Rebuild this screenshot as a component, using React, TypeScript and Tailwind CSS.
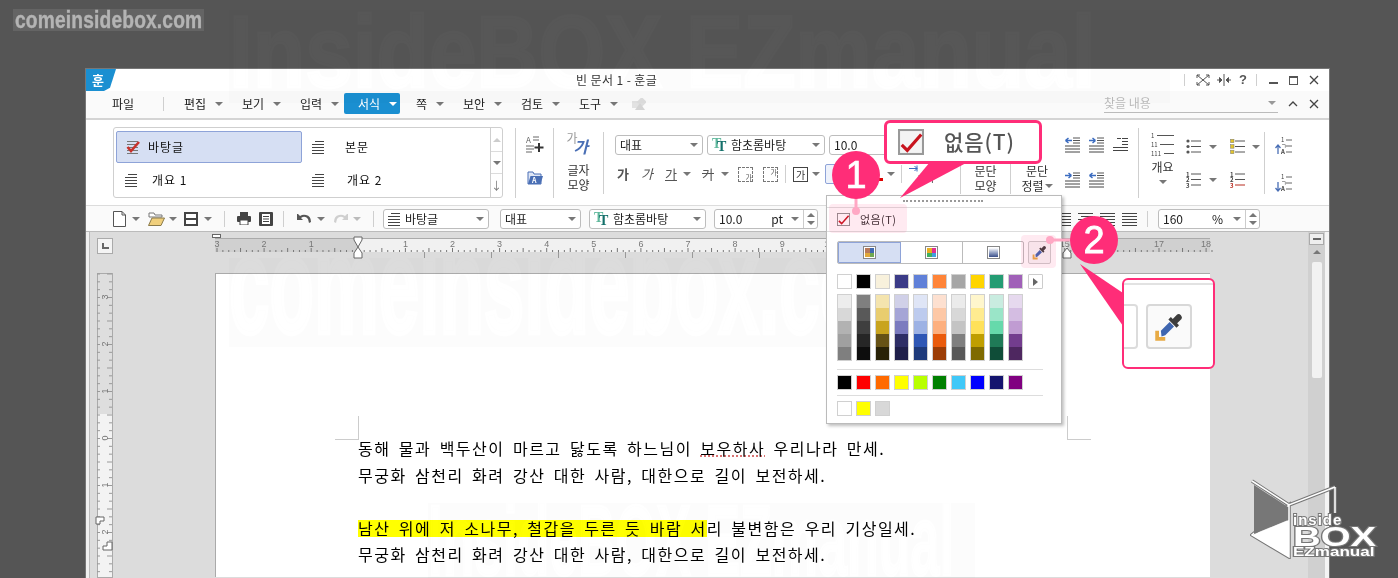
import React from "react";

const PINK = "#ff2d78";

function Caret({ className = "" }: { className?: string }) {
  return <span className={`inline-block h-0 w-0 border-x-[4px] border-t-[4px] border-x-transparent border-t-[#777] ${className}`} />;
}

function Sep({ className = "" }: { className?: string }) {
  return <span className={`block w-px bg-[#cfcfcf] ${className}`} />;
}

// stack of horizontal lines, like the paragraph glyphs in the ribbon
function Lines({ w = 15, rows, color = "#444" }: { w?: number; rows: [number, number, number][]; color?: string }) {
  return (
    <svg width={w} height={16} viewBox={`0 0 ${w} 16`} className="block shrink-0">
      {rows.map(([a, b, y], i) => (
        <line key={i} x1={a} x2={b} y1={y + 0.5} y2={y + 0.5} stroke={color} strokeWidth={1} />
      ))}
    </svg>
  );
}

const STYLE_LINES: [number, number, number][] = [
  [3, 12, 2], [0, 12, 5], [0, 12, 8], [0, 12, 11], [0, 12, 14],
];

function StyleCheck() {
  return (
    <svg width={14} height={16} viewBox="0 0 14 16" className="block shrink-0">
      <path d="M1 2.5 H12 M1 5.5 H12 M1 8.5 H12 M1 11.5 H12 M1 14.5 H12" stroke="#777" />
      <path d="M1.5 8 L5 12 L13 3" fill="none" stroke="#c8322c" strokeWidth="2.6" />
    </svg>
  );
}

function CheckBox({ size = 13, thick = false }: { size?: number; thick?: boolean }) {
  return (
    <svg width={size} height={size} viewBox="0 0 14 14" className="block shrink-0">
      <rect x="0.5" y="0.5" width="13" height="13" fill={thick ? "#f4f4f4" : "#fff"} stroke={thick ? "#999" : "#8a8a8a"} strokeWidth={thick ? 1.2 : 1} />
      <path d="M2 8.5 L5 11.5 L12.5 3" fill="none" stroke="#c8141e" strokeWidth="1.7" />
    </svg>
  );
}

function Dropper({ size = 16 }: { size?: number }) {
  return (
    <svg width={size} height={size} viewBox="0 0 24 24" className="block shrink-0">
      <path d="M15 5.5 L18.5 2 Q20 1 21.5 2.5 Q23 4 22 5.5 L18.5 9 L20 10.5 L18 12.5 L11.5 6 L13.5 4 Z" fill="#3d3d3d" />
      <path d="M12.5 8 L16 11.5 L9 18.5 L6 19.5 L5.5 15 Z" fill="#3f66b0" />
      <path d="M1 15 H4 V20 H9 V23 H1 Z" fill="#e8ab45" />
    </svg>
  );
}

function FontT() {
  return (
    <span className="relative block h-[14px] w-[15px] shrink-0 font-['Liberation_Serif',serif] text-[14px] font-bold leading-[14px]">
      <span className="absolute left-0 top-[-1px] text-[#5fb89c]">T</span>
      <span className="absolute left-[5px] top-[2px] text-[#14706a]">T</span>
    </span>
  );
}

function Field({ w, children, spin = false, caret = true }: { w: number; children: React.ReactNode; spin?: boolean; caret?: boolean }) {
  return (
    <div style={{ width: w }} className="flex h-[20px] shrink-0 items-center rounded-[3px] border border-[#bdbdbd] bg-white pl-[4px] text-[12px] text-[#222]">
      <div className="flex min-w-0 flex-1 items-center gap-[4px] whitespace-nowrap">{children}</div>
      {caret && <Caret className="mr-[4px] ml-[2px]" />}
      {spin && (
        <div className="flex h-full w-[14px] flex-col items-center justify-center gap-[4px] border-l border-[#ccc]">
          <span className="h-0 w-0 border-x-[4px] border-b-[4px] border-x-transparent border-b-[#777]" />
          <span className="h-0 w-0 border-x-[4px] border-t-[4px] border-x-transparent border-t-[#777]" />
        </div>
      )}
    </div>
  );
}

function Menu({ label, w, active = false }: { label: string; w: number; active?: boolean }) {
  if (active) {
    return (
      <div style={{ width: w }} className="shrink-0">
        <div className="flex h-[21px] w-[56px] items-center rounded-[2px] bg-[#1a8fd1] pl-[14px] text-[12px] text-white">
          {label}
          <span className="ml-[9px] h-0 w-0 border-x-[4px] border-t-[4px] border-x-transparent border-t-white" />
        </div>
      </div>
    );
  }
  return (
    <div style={{ width: w }} className="flex shrink-0 items-center text-[12px] text-[#222]">
      {label}
      <Caret className="ml-[9px]" />
    </div>
  );
}

function GalleryItem({ label, selected = false, indent }: { label: string; selected?: boolean; indent: number }) {
  return (
    <div className={`flex h-[32px] w-[186px] items-center pl-[9px] text-[12px] text-[#111] ${selected ? "rounded-[2px] border border-[#8ea3d8] bg-[#d6dff3]" : ""}`}>
      {selected ? <StyleCheck /> : <Lines w={13} rows={STYLE_LINES} />}
      <span style={{ marginLeft: indent }} className="tracking-[1px] whitespace-pre">{label}</span>
    </div>
  );
}

function Gallery() {
  return (
    <div className="mt-[7px] ml-[27px] flex h-[71px] w-[390px] shrink-0 rounded-[3px] border border-[#cfcfcf] pl-[2px] pt-[3px]">
      <div className="grid w-[374px] grid-cols-2 grid-rows-2 gap-x-[0px]">
        <GalleryItem label="바탕글" selected indent={8} />
        <GalleryItem label="본문" indent={20} />
        <GalleryItem label="개요 1" indent={14} />
        <GalleryItem label="개요 2" indent={22} />
      </div>
      <div className="mt-[-3px] flex h-[69px] w-[12px] flex-col items-center border-l border-[#cfcfcf] text-[#777]">
        <div className="flex h-[23px] items-center"><span className="h-0 w-0 border-x-[4px] border-b-[4px] border-x-transparent border-b-[#ccc]" /></div>
        <div className="flex h-[23px] w-full items-center justify-center border-y border-[#dcdcdc]"><Caret /></div>
        <div className="flex h-[23px] items-center text-[11px]">↓</div>
      </div>
    </div>
  );
}

function FontRow2() {
  return (
    <div className="mt-[9px] ml-[13px] flex h-[20px] items-center text-[13px] text-[#555]">
      <span className="w-[24px] font-bold">가</span>
      <span className="w-[24px] italic">가</span>
      <span className="w-[18px] underline">가</span>
      <Caret className="mr-[11px]" />
      <span className="w-[19px] line-through">가</span>
      <Caret className="mr-[9px]" />
      <span className="mr-[10px] flex h-[15px] w-[15px] items-end justify-end border border-dashed border-[#777] text-[7px] leading-[8px]">가</span>
      <span className="flex h-[15px] w-[15px] items-start justify-end border border-dashed border-[#777] text-[7px] leading-[8px]">가</span>
      <Sep className="mx-[7px] h-[18px]" />
      <span className="flex h-[15px] w-[15px] items-center justify-center border border-[#444] text-[10px] text-[#333]">가</span>
      <Caret className="ml-[4px]" />
      <span className="ml-[5px] h-[20px] w-[30px] rounded-[2px] border border-[#8ea3d8] bg-[#eef2fb]" />
      <span className="ml-[14px] flex w-[14px] flex-col items-center">
        <span className="text-[10px] leading-[10px]">&nbsp;</span>
        <span className="h-[3px] w-[13px] bg-[#e00000]" />
      </span>
      <Caret className="ml-[4px]" />
      <Sep className="ml-[6px] h-[18px]" />
      <div className="ml-[6px] flex h-[20px] w-[36px] flex-col items-center justify-end">
        <svg width={34} height={8} viewBox="0 0 34 8">
          <path d="M0 3.5 H8 M8 0.5 V6.5 M5.5 1 L8 3.5 L5.5 6 M26 3.5 H34 M26 0.5 V6.5 M28.5 1 L26 3.5 L28.5 6" stroke="#3b6cc0" fill="none" />
        </svg>
        <span className="text-[9px] leading-[11px] text-[#333]">가나</span>
      </div>
    </div>
  );
}

function ParaIcon({ arrow, left = true }: { arrow: boolean; left?: boolean }) {
  return (
    <svg width={15} height={16} viewBox="0 0 15 16" className="block shrink-0">
      {arrow && <path d={left ? "M0.5 3.5 H7 M0.5 3.5 L3.5 1 M0.5 3.5 L3.5 6" : "M0 3.5 H6.5 M6.5 3.5 L3.5 1 M6.5 3.5 L3.5 6"} stroke="#3b6cc0" strokeWidth={1.5} fill="none" />}
      {[1, 3.5, 6].map((y) => <line key={y} x1={8} x2={15} y1={y} y2={y} stroke="#555" />)}
      {[9, 12, 15].map((y) => <line key={y} x1={0} x2={15} y1={y} y2={y} stroke="#444" />)}
    </svg>
  );
}

function ListIcon({ kind }: { kind: "dot" | "sq" | "num" | "red" }) {
  return (
    <svg width={15} height={16} viewBox="0 0 15 16" className="block shrink-0">
      {[2, 7.5, 13].map((y, i) => (
        <g key={y}>
          {kind === "dot" && <circle cx={2} cy={y} r={1.6} fill="#555" />}
          {kind === "sq" && <rect x={0.5} y={y - 1.8} width={3.5} height={3.5} fill="#e2c42c" stroke="#777" strokeWidth={0.5} />}
          {(kind === "num" || kind === "red") && (
            <text x={0} y={y + 2.5} fontSize={6} fontWeight={700} fill={kind === "red" && i === 2 ? "#b82c20" : "#444"}>{i + 1}</text>
          )}
          <line x1={5} x2={15} y1={y} y2={y} stroke={kind === "red" && i === 2 ? "#b82c20" : "#555"} />
        </g>
      ))}
    </svg>
  );
}

function SortIcon({ up }: { up: boolean }) {
  return (
    <svg width={17} height={18} viewBox="0 0 17 18" className="block shrink-0">
      <text x={6} y={5} fontSize={6} fill="#444">1</text>
      <text x={6} y={11} fontSize={6} fill="#444">ㄱ</text>
      <text x={6} y={17} fontSize={6} fontWeight={700} fill="#444">A</text>
      {[3, 9, 15].map((y) => <line key={y} x1={11} x2={17} y1={y} y2={y} stroke="#666" />)}
      <path d={up ? "M3 17 V8 M0.5 11 L3 8 L5.5 11" : "M3 8 V17 M0.5 14 L3 17 L5.5 14"} stroke="#4a6fb5" strokeWidth={1.3} fill="none" />
    </svg>
  );
}

function Ribbon() {
  return (
    <div className="flex h-[86px] border-b border-[#dcdcdc] bg-white text-[#333]">
      <Gallery />
      <Sep className="mt-[8px] ml-[12px] h-[70px]" />
      <div className="flex w-[37px] flex-col items-center pt-[15px]">
        <svg width={18} height={18} viewBox="0 0 18 18">
          <text x={0} y={8} fontSize={8} fill="#666">A</text>
          <path d="M7 2 H13 M7 5 H13 M0 11 H8 M0 14 H8 M0 17 H6" stroke="#666" fill="none" />
          <path d="M13 8 V17 M8.5 12.5 H17.5" stroke="#333" strokeWidth={2} />
        </svg>
        <svg width={16} height={14} viewBox="0 0 16 14" className="mt-[18px]">
          <path d="M1 1 H6 L7 3 H14 V13 H1 Z" fill="#dfe7f6" stroke="#4a6fb5" />
          <path d="M3.5 5 H16 L13.5 13 H1 Z" fill="#4a6fb5" />
          <text x={5} y={12} fontSize={7} fontWeight={700} fill="#fff">A</text>
        </svg>
      </div>
      <Sep className="mt-[8px] h-[70px]" />
      <div className="flex w-[49px] flex-col items-center pt-[12px] text-[12px] leading-[15px]">
        <div className="relative h-[24px] w-[24px]">
          <span className="absolute left-0 top-0 text-[12px] leading-[12px] text-[#999]">가</span>
          <span className="absolute left-[7px] top-[6px] text-[16px] font-bold italic leading-[17px] text-[#4a6fb5]">가</span>
        </div>
        <span className="mt-[6px]">글자</span>
        <span>모양</span>
      </div>
      <Sep className="mt-[12px] h-[62px]" />
      <div className="w-[356px] pl-[11px] pt-[15px]">
        <div className="flex gap-[4px]">
          <Field w={88}>대표</Field>
          <Field w={118}><FontT />함초롬바탕</Field>
          <Field w={100} caret={false}>10.0</Field>
        </div>
        <div className="ml-[-11px]"><FontRow2 /></div>
      </div>
      <Sep className="mt-[12px] h-[62px]" />
      <div className="flex w-[49px] flex-col items-center pt-[43px] text-[12px] leading-[15px]">
        <span>문단</span>
        <span>모양</span>
      </div>
      <Sep className="mt-[12px] h-[62px]" />
      <div className="flex w-[52px] flex-col items-center pt-[43px] text-[12px] leading-[15px]">
        <span>문단</span>
        <span className="flex items-center">정렬<Caret className="ml-[1px] border-x-[3px] border-t-[3px]" /></span>
      </div>
      <div className="flex w-[75px] flex-col gap-[19px] pl-[2px] pt-[17px]">
        <div className="flex gap-[9px]">
          <ParaIcon arrow />
          <ParaIcon arrow left={false} />
          <Lines rows={[[4, 8, 1], [9, 15, 1], [9, 15, 4], [9, 15, 7], [0, 15, 10], [0, 15, 13]]} />
        </div>
        <div className="flex gap-[9px]">
          <ParaIcon arrow left={false} />
          <ParaIcon arrow />
        </div>
      </div>
      <Sep className="mt-[8px] h-[70px]" />
      <div className="flex w-[47px] flex-col items-center pt-[12px] text-[12px]">
        <svg width={24} height={26} viewBox="0 0 24 26">
          <text x={0} y={6} fontSize={6} fill="#444">1</text>
          <text x={0} y={15} fontSize={6} fill="#444">11</text>
          <text x={0} y={24} fontSize={6} fill="#444">111</text>
          <path d="M6 3.5 H23 M9 12.5 H23 M13 21.5 H23" stroke="#555" />
        </svg>
        <span className="leading-[18px]">개요</span>
        <Caret className="mt-[4px]" />
      </div>
      <div className="flex w-[78px] flex-col gap-[17px] pt-[19px]">
        <div className="flex items-center">
          <ListIcon kind="dot" /><Caret className="ml-[8px] mr-[13px]" /><ListIcon kind="sq" /><Caret className="ml-[7px]" />
        </div>
        <div className="flex items-center">
          <ListIcon kind="num" /><Caret className="ml-[8px] mr-[13px]" /><ListIcon kind="red" />
        </div>
      </div>
      <Sep className="mt-[12px] h-[62px]" />
      <div className="ml-[10px] flex flex-col gap-[19px] pt-[17px]">
        <SortIcon up />
        <SortIcon up={false} />
      </div>
    </div>
  );
}

function Toolbar() {
  return (
    <div className="flex h-[26px] items-center border-b border-[#bbb] bg-[#fafafa] pl-[27px] text-[12px]">
      <svg width={13} height={16} viewBox="0 0 13 16" className="block">
        <path d="M0.5 0.5 H9 L12.5 4 V15.5 H0.5 Z M9 0.5 V4 H12.5" fill="#fff" stroke="#555" />
      </svg>
      <Caret className="ml-[6px] mr-[8px]" />
      <svg width={17} height={14} viewBox="0 0 17 14" className="block">
        <path d="M1 1 H6 L7 3 H14 V5 H1 Z" fill="#fff" stroke="#777" />
        <path d="M4 6 H16.5 L13 13.5 H0.5 Z" fill="#f0cf7c" stroke="#8a7a4a" />
      </svg>
      <Caret className="ml-[4px] mr-[7px]" />
      <svg width={14} height={14} viewBox="0 0 14 14" className="block">
        <rect width={14} height={14} fill="#444" />
        <rect x={2} y={2} width={10} height={4} fill="#fff" />
        <rect x={2} y={8} width={10} height={4} fill="#fff" />
      </svg>
      <Caret className="ml-[6px]" />
      <Sep className="ml-[12px] h-[16px]" />
      <svg width={14} height={13} viewBox="0 0 14 13" className="ml-[12px] block">
        <rect x={3} y={0} width={8} height={4} fill="#444" />
        <rect x={0} y={4} width={14} height={6} rx={1} fill="#444" />
        <rect x={3} y={8} width={8} height={5} fill="#fff" stroke="#444" />
      </svg>
      <svg width={14} height={14} viewBox="0 0 14 14" className="ml-[8px] block">
        <rect width={14} height={14} rx={1} fill="#444" />
        <rect x={3} y={2} width={8} height={10} fill="#fff" />
        <path d="M4 4.5 H10 M4 7 H10 M4 9.5 H10" stroke="#444" />
      </svg>
      <Sep className="ml-[10px] h-[16px]" />
      <svg width={15} height={11} viewBox="0 0 15 11" className="ml-[13px] block">
        <path d="M0 1 V7 H6 L4 5 Q8 2 11 6 L12 10 L14 9 Q14 3 9 2 Q6 1 3 3 L1 1 Z" fill="#555" />
      </svg>
      <Caret className="ml-[5px] mr-[8px]" />
      <svg width={15} height={11} viewBox="0 0 15 11" className="block">
        <path d="M15 1 V7 H9 L11 5 Q7 2 4 6 L3 10 L1 9 Q1 3 6 2 Q9 1 12 3 L14 1 Z" fill="#cfcfcf" />
      </svg>
      <Caret className="ml-[5px] border-t-[#bbb]" />
      <Sep className="ml-[12px] h-[16px]" />
      <div className="ml-[9px]">
        <Field w={106}><Lines w={13} rows={STYLE_LINES} />바탕글</Field>
      </div>
      <div className="ml-[11px] flex gap-[8px]">
        <Field w={81}>대표</Field>
        <Field w={117}><FontT />함초롬바탕</Field>
      </div>
      <div className="ml-[8px]">
        <Field w={104} caret spin><span className="flex w-full justify-between pr-[6px]"><span>10.0</span><span>pt</span></span></Field>
      </div>
      <div className="ml-[238px] flex gap-[7px]">
        {[0, 1, 2, 3].map((i) => (
          <Lines key={i} rows={[[0, 15, 2], [i === 1 ? 3 : 0, 15, 5], [0, 15, 8], [i === 1 ? 3 : 0, 15, 11], [0, 15, 14]]} />
        ))}
      </div>
      <Sep className="ml-[10px] h-[16px]" />
      <div className="ml-[10px]">
        <Field w={102} caret spin><span className="flex w-full justify-between pr-[8px]"><span>160</span><span>%</span></span></Field>
      </div>
    </div>
  );
}

function HRuler() {
  const u = 47.1;
  const o = 143;
  const ticks = [];
  for (let i = 0; i < 170; i++) {
    const x = 2 + i * (u / 8);
    ticks.push(<line key={i} x1={x} x2={x} y1={i % 4 === 0 ? 10 : 12} y2={14} stroke="#777" />);
  }
  for (let i = 0; i < 10; i++) {
    const x = 209.5 + i * 67;
    ticks.push(<line key={`t${i}`} x1={x} x2={x} y1={14} y2={20} stroke="#999" />);
  }
  const nums = [3, 2, 1, 0, 1, 2, 3, 4, 5, 6, 7, 8, 9, 10, 11, 12, 13, 14, 15, 16, 17, 18];
  return (
    <svg width={995} height={24} viewBox="0 0 995 24" className="block overflow-visible">
      <rect x={0} y={0} width={995} height={14} fill="#d0d0d0" />
      <rect x={o} y={0} width={709} height={14} fill="#f1f1f1" />
      <line x1={0} x2={995} y1={0.5} y2={0.5} stroke="#aaa" />
      {ticks}
      {nums.map((n, i) => (
        <text key={i} x={2 + i * u} y={9} fontSize={9} textAnchor="middle" fill="#777" fontFamily="Liberation Sans">{n === 0 ? "" : n}</text>
      ))}
      <rect x={-2.5} y={-3.5} width={8} height={3} fill="#fff" stroke="#666" />
      <path d={`M${o - 4} -1 H${o + 4} V2 L${o} 9 L${o + 4} 15 V20 H${o - 4} V15 L${o} 9 L${o - 4} 2 Z`} fill="#fff" stroke="#666" />
      <path d={`M${o + 709 - 4} 20 V15 L${o + 709} 10 L${o + 709 + 4} 15 V20 Z`} fill="#fff" stroke="#666" />
    </svg>
  );
}

function VRuler() {
  const u = 47;
  const ticks = [];
  for (let i = 0; i < 40; i++) {
    const y = 1 + i * (u / 6);
    ticks.push(
      <g key={i}>
        <line x1={0} x2={3} y1={y} y2={y} stroke="#999" />
        <line x1={i % 3 === 0 ? 10 : 12} x2={15} y1={y} y2={y} stroke="#999" />
      </g>,
    );
  }
  const nums: [string, number][] = [["3", 24], ["2", 71], ["1", 118], ["0", 165], ["1", 212], ["2", 259]];
  return (
    <svg width={16} height={304} viewBox="0 0 16 304" className="block shrink-0 overflow-visible">
      <rect x={0.5} y={0.5} width={15} height={304} fill="#f3f3f3" stroke="#aaa" />
      <rect x={1} y={1} width={14} height={140} fill="#dedede" />
      {ticks}
      {nums.map(([n, y], i) => (
        <text key={i} x={8} y={y + 3} fontSize={9} textAnchor="middle" fill="#777" fontFamily="Liberation Sans" transform={`rotate(-90 8 ${y})`}>{n}</text>
      ))}
      <path d="M-1 244 H7 V248 H3 V251 H-1 Z" fill="#fff" stroke="#666" />
      <path d="M16 269 H11 V273 H7 V277 H16 Z" fill="#fff" stroke="#666" transform="translate(-1 0)" />
    </svg>
  );
}

function Doc() {
  return (
    <div className="relative ml-[102px] mt-[16px] h-[304px] w-[995px] border-l border-t border-[#aaa] bg-white">
      <span className="absolute left-[119px] top-[142px] h-[24px] w-[24px] border-b border-r border-[#ccc]" />
      <span className="absolute left-[851px] top-[142px] h-[24px] w-[24px] border-b border-l border-[#ccc]" />
      <div className="pl-[142px] pt-[161px] text-[16px] leading-[26.5px] tracking-[1.5px] text-black [word-spacing:3.3px]">
        <p className="whitespace-nowrap">동해 물과 백두산이 마르고 닳도록 하느님이 <span className="underline decoration-dotted decoration-[#c44]">보우하사</span> 우리나라 만세.</p>
        <p className="whitespace-nowrap">무궁화 삼천리 화려 강산 대한 사람, 대한으로 길이 보전하세.</p>
        <p className="h-[26.5px]" />
        <p className="whitespace-nowrap"><span className="inline-block h-[17px] bg-[#ffff00] leading-[17px]">남산 위에 저 소나무, 철갑을 두른 듯 바람 서</span>리 불변함은 우리 기상일세.</p>
        <p className="whitespace-nowrap">무궁화 삼천리 화려 강산 대한 사람, 대한으로 길이 보전하세.</p>
      </div>
    </div>
  );
}

function Main() {
  return (
    <div className="flex h-[346px] overflow-hidden bg-[#dcdcdc]">
      <div className="h-full w-[4px] border-r border-[#bbb] bg-[#f0f0f0]" />
      <div className="w-[1218px] shrink-0">
        <div className="flex pt-[6px]">
          <div className="ml-[7px] flex h-[16px] w-[16px] items-center justify-center border border-[#aaa] bg-[#f4f4f4]">
            <span className="mb-[1px] h-[6px] w-[7px] border-b-2 border-l-2 border-[#666]" />
          </div>
          <div className="ml-[102px]"><HRuler /></div>
        </div>
        <div className="mt-[-5px] flex">
          <div className="ml-[7px] mt-[16px]"><VRuler /></div>
          <Doc />
        </div>
      </div>
      <div className="flex w-[17px] shrink-0 flex-col items-center bg-[#d0d0d0]">
        <div className="mt-[1px] flex h-[12px] w-[15px] items-center justify-center border border-[#aaa] bg-[#eee]">
          <span className="h-[2px] w-[8px] bg-[#666]" />
        </div>
        <div className="flex h-[14px] items-center"><span className="h-0 w-0 border-x-[4px] border-b-[4px] border-x-transparent border-b-[#777]" /></div>
        <div className="mt-[3px] h-[116px] w-[10px] rounded-[2px] bg-[#f2f2f2]" />
      </div>
      <div className="w-[4px] bg-[#f4f4f4]" />
    </div>
  );
}

const ROW1 = ["#ffffff", "#000000", "#f8f1dc", "#3b3b87", "#6080d8", "#ff8438", "#a6a6a6", "#ffd500", "#249c73", "#a060b8"];
const COLS = [
  ["#ededed", "#d8d8d8", "#b2b2b2", "#a0a0a0", "#7f7f7f"],
  ["#7f7f7f", "#595959", "#3f3f3f", "#262626", "#0d0d0d"],
  ["#f4e4ae", "#e9cd6f", "#c9a41e", "#665215", "#282106"],
  ["#d0d0e8", "#a5a5d6", "#7b7bbf", "#2e2e66", "#1f1f4a"],
  ["#dfe5f6", "#bdcbee", "#9db2e4", "#2f57b5", "#1e3a7b"],
  ["#fde0d0", "#fdc8a6", "#fdb07f", "#ea5b0c", "#9c3d06"],
  ["#ebebeb", "#d8d8d8", "#c4c4c4", "#7f7f7f", "#595959"],
  ["#fff6cc", "#ffeb90", "#ffe15a", "#bf9e00", "#7f6a00"],
  ["#c9ece0", "#9ae5c8", "#66d9ab", "#1f7a57", "#0f4d38"],
  ["#e6d9ee", "#d4bde2", "#c09cd2", "#733d8e", "#4e2760"],
];
const ROW2 = ["#000000", "#ff0000", "#ff6a00", "#ffff00", "#b8ff00", "#008000", "#40c8f8", "#0000ff", "#14146e", "#800080"];
const ROW3 = ["#ffffff", "#ffff00", "#d8d8d8"];

function Swatch({ c }: { c: string }) {
  return <span style={{ backgroundColor: c }} className="block h-[15px] w-[15px] border border-[#d0d0d0]" />;
}

function TabIcon({ kind }: { kind: number }) {
  return (
    <span className="grid h-[13px] w-[13px] grid-cols-2 border border-[#888] bg-white p-[1px]">
      {kind === 0 && ["#b87a5a", "#4068b0", "#e0a83a", "#70a850"].map((c) => <span key={c} style={{ backgroundColor: c }} />)}
      {kind === 1 && ["#e8b020", "#e03090", "#40b060", "#40a0e0"].map((c) => <span key={c} style={{ backgroundColor: c }} />)}
      {kind === 2 && <span className="col-span-2 h-full bg-gradient-to-b from-white to-[#3b4f8a]" />}
    </span>
  );
}

function ColorPopup() {
  return (
    <div className="absolute left-[826px] top-[195px] h-[229px] w-[236px] border border-[#bbb] bg-white shadow-[2px_2px_3px_rgba(0,0,0,0.25)]">
      <div className="flex h-[12px] justify-end border-b border-[#ddd] pr-[78px] pt-[4px]">
        <span className="h-[2px] w-[80px] border-t-2 border-dotted border-[#999]" />
      </div>
      <div className="flex h-[24px] items-center gap-[10px] border-b border-[#ddd] pl-[10px] text-[11px] tracking-[0.4px] text-[#333]">
        <CheckBox />
        <span>없음(T)</span>
      </div>
      <div className="flex pl-[10px] pt-[9px]">
        <div className="flex h-[23px] w-[187px] overflow-hidden rounded-[2px] border border-[#bbb]">
          <div className="flex w-[63px] items-center justify-center border border-[#8ea3d8] bg-[#d6dff3]"><TabIcon kind={0} /></div>
          <div className="flex w-[62px] items-center justify-center border-r border-[#bbb]"><TabIcon kind={1} /></div>
          <div className="flex flex-1 items-center justify-center"><TabIcon kind={2} /></div>
        </div>
        <div className="ml-[4px] flex h-[23px] w-[23px] items-center justify-center rounded-[2px] border border-[#ccc] bg-[#f8f8f8]"><Dropper size={15} /></div>
      </div>
      <div className="mt-[10px] flex items-center gap-[4px] pl-[10px]">
        {ROW1.map((c) => <Swatch key={c} c={c} />)}
        <span className="ml-[1px] flex h-[15px] w-[15px] items-center justify-center rounded-[1px] border border-[#ccc]">
          <span className="h-0 w-0 border-y-[4px] border-l-[5px] border-y-transparent border-l-[#666]" />
        </span>
      </div>
      <div className="mt-[5px] flex gap-[4px] pl-[10px]">
        {COLS.map((col, i) => (
          <div key={i} className="w-[15px] border border-[#d0d0d0]">
            {col.map((c, j) => <span key={j} style={{ backgroundColor: c }} className="block h-[13px]" />)}
          </div>
        ))}
      </div>
      <div className="ml-[10px] mt-[8px] h-px w-[206px] bg-[#ddd]" />
      <div className="mt-[5px] flex gap-[4px] pl-[10px]">
        {ROW2.map((c) => <Swatch key={c} c={c} />)}
      </div>
      <div className="ml-[10px] mt-[5px] h-px w-[206px] bg-[#ddd]" />
      <div className="mt-[5px] flex gap-[4px] pl-[10px]">
        {ROW3.map((c) => <Swatch key={c} c={c} />)}
      </div>
    </div>
  );
}

function Annotations() {
  return (
    <>
      <div className="absolute left-[829px] top-[204px] h-[29px] w-[78px] rounded-[4px] bg-[#ff2d78]/10" />
      <div className="absolute left-[1021px] top-[235px] h-[33px] w-[35px] rounded-[4px] bg-[#ff2d78]/10" />
      <svg width={1398} height={578} viewBox="0 0 1398 578" className="pointer-events-none absolute left-0 top-0">
        <polygon points="930,162 968,162 900,198" fill={PINK} />
        <polygon points="1080,264 1123,293 1123,326" fill={PINK} />
        <line x1={856} x2={856} y1={195} y2={212} stroke="#ffa8c4" strokeWidth={3} />
        <circle cx={856} cy={211} r={4} fill="#ffa8c4" />
        <line x1={1050} x2={1075} y1={240} y2={240} stroke="#ffa8c4" strokeWidth={3} />
        <circle cx={1050} cy={240} r={4} fill="#ffa8c4" />
      </svg>
      <div className="absolute left-[884px] top-[120px] flex h-[44px] w-[158px] items-center rounded-[6px] border-[3px] border-[#ff2d78] bg-white pl-[11px]">
        <CheckBox size={26} thick />
        <span className="ml-[20px] text-[21px] font-medium tracking-[0.9px] whitespace-nowrap text-[#555]">없음(T)</span>
      </div>
      <div className="absolute left-[832px] top-[151px] flex h-[48px] w-[48px] items-center justify-center rounded-full bg-[#ff2d78] font-['Liberation_Sans',sans-serif] text-[38px] text-white [-webkit-text-stroke:0.6px_#fff]">1</div>
      <div className="absolute left-[1070px] top-[216px] flex h-[48px] w-[48px] items-center justify-center rounded-full bg-[#ff2d78] font-['Liberation_Sans',sans-serif] text-[38px] text-white [-webkit-text-stroke:0.8px_#fff]">2</div>
      <div className="absolute left-[1122px] top-[278px] h-[91px] w-[93px] rounded-[6px] border-2 border-[#ff2d78] bg-white">
        <div className="mt-[3px] h-[2px] bg-[#e2e2e2]" />
        <div className="mt-[19px] flex">
          <span className="h-[45px] w-[14px] rounded-r-[4px] border-2 border-l-0 border-[#dcdcdc]" />
          <span className="ml-[8px] flex h-[45px] w-[46px] items-center justify-center rounded-[4px] border-2 border-[#d8d8d8] bg-[#fafafa]">
            <Dropper size={30} />
          </span>
        </div>
      </div>
    </>
  );
}

// faint oversized stamps: the box darkens a little, the letters add the light back
function Watermarks() {
  const stamp = "block origin-left whitespace-nowrap font-['Liberation_Sans',sans-serif] font-bold text-[#030303] mix-blend-plus-lighter";
  return (
    <>
      <div className="pointer-events-none absolute left-[229px] top-[10px] h-[93px] w-[941px] overflow-hidden bg-black/[0.012]">
        <span className={`${stamp} mt-[-4px] scale-x-[0.84] text-[102px] leading-[93px] [-webkit-text-stroke:3px_#030303]`}>InsideBOX EZmanual</span>
      </div>
      <div className="pointer-events-none absolute left-[229px] top-[258px] h-[89px] w-[820px] overflow-hidden bg-black/[0.012]">
        <span className={`${stamp} mt-[-18px] scale-x-[0.52] text-[140px] leading-[89px] [-webkit-text-stroke:5px_#030303]`}>comeinsidebox.com</span>
      </div>
      <div className="pointer-events-none absolute left-[428px] top-[503px] h-[75px] w-[547px] overflow-hidden bg-black/[0.012]">
        <span className={`${stamp} scale-x-[0.52] text-[100px] leading-[75px] [-webkit-text-stroke:3px_#030303]`}>InsideBOX EZmanual</span>
      </div>
    </>
  );
}

function Logo() {
  const edge = "font-['Liberation_Sans',sans-serif] font-bold leading-none text-white [paint-order:stroke_fill] [-webkit-text-stroke:2px_#777] whitespace-nowrap";
  return (
    <div className="pointer-events-none absolute left-[1250px] top-[479px] h-[99px] w-[128px]">
      <svg width={90} height={80} viewBox="0 0 90 80" className="absolute left-0 top-0">
        <path d="M2 2 L39 26 L85 8 M85 8 V34 M39 26 V78 L2 56 Z" fill="none" stroke="#777" strokeWidth={3.5} />
        <path d="M2 2 L39 26 L85 8 M85 8 V34 M39 26 V78 L2 56 Z" fill="none" stroke="#fff" strokeWidth={1.5} />
        <path d="M4 6 L38 28 V41 L4 55 Z" fill="#777" />
        <path d="M2 56 L39 41 V78 Z" fill="#fff" />
      </svg>
      <div className="absolute left-[43px] top-[33px] w-[84px]">
        <div className={`${edge} h-[12px] text-[15px] tracking-[1px]`}>inside</div>
        <div className={`${edge} h-[22px] origin-top-left scale-x-[1.42] text-[27px] leading-[22px]`}>BOX</div>
        <div className={`${edge} h-[10px] origin-top-left scale-x-[1.42] text-[12px] leading-[10px]`}>EZmanual</div>
      </div>
    </div>
  );
}

function TitleBar() {
  return (
    <div className="relative flex h-[22px] items-center bg-white text-[12px] text-[#333]">
      <div className="flex h-[22px] w-[30px] items-center bg-[#1a8fd1] pl-[6px] text-[13px] font-bold text-white [clip-path:polygon(0_0,100%_0,80%_85%,60%_100%,0_100%)]">훈</div>
      <span className="ml-[460px] tracking-[0.4px]">빈 문서 1 - 훈글</span>
      <div className="ml-auto flex items-center pr-[10px] text-[#444]">
        <Sep className="mr-[11px] h-[12px]" />
        <svg width={14} height={12} viewBox="0 0 14 12"><path d="M1 1 L13 11 M13 1 L1 11 M1 4 V1 H4 M10 1 H13 V4 M1 8 V11 H4 M10 11 H13 V8" fill="none" stroke="#555" /></svg>
        <svg width={14} height={12} viewBox="0 0 14 12" className="ml-[7px]"><path d="M7 0 V12 M0 6 H5 M9 6 H14 M5 6 L2.5 3.5 V8.5 Z M9 6 L11.5 3.5 V8.5 Z" fill="#555" stroke="#555" /></svg>
        <span className="ml-[8px] w-[10px] font-['Liberation_Sans',sans-serif] text-[13px] font-bold text-[#555]">?</span>
        <Sep className="ml-[7px] mr-[12px] h-[12px]" />
        <span className="mt-[6px] h-[2px] w-[9px] bg-[#555]" />
        <span className="ml-[11px] h-[9px] w-[9px] border border-t-2 border-[#555]" />
        <svg width={10} height={10} viewBox="0 0 10 10" className="ml-[11px]"><path d="M1 1 L9 9 M9 1 L1 9" stroke="#444" strokeWidth={1.3} /></svg>
      </div>
    </div>
  );
}

function MenuBar() {
  return (
    <div className="flex h-[29px] items-center border-b-2 border-[#d4d4d4] bg-[#fafafa] pl-[26px] pb-[2px] text-[12px] text-[#222]">
      <span className="w-[51px] shrink-0">파일</span>
      <Sep className="mr-[20px] h-[14px]" />
      <Menu label="편집" w={58} />
      <Menu label="보기" w={58} />
      <Menu label="입력" w={44} />
      <Menu label="서식" w={72} active />
      <Menu label="쪽" w={47} />
      <Menu label="보안" w={58} />
      <Menu label="검토" w={58} />
      <Menu label="도구" w={53} />
      <svg width={14} height={12} viewBox="0 0 14 12"><rect x={0} y={3} width={7} height={7} fill="#e2e2e2" /><rect x={6} y={0} width={7} height={7} fill="#ddd" transform="rotate(45 9 4)" /><path d="M3 12 L8 5 L13 12 Z" fill="#d4d4d4" /></svg>
      <div className="ml-[458px] flex h-[18px] w-[174px] items-center justify-between border-b border-[#bbb] text-[#bbb]">
        <span>찾을 내용</span>
        <Caret className="mr-[2px] border-t-[#999]" />
      </div>
      <svg width={10} height={6} viewBox="0 0 10 6" className="ml-[10px]"><path d="M1 5 L5 1 L9 5" fill="none" stroke="#444" strokeWidth={1.3} /></svg>
      <svg width={10} height={10} viewBox="0 0 10 10" className="ml-[11px]"><path d="M1 1 L9 9 M9 1 L1 9" stroke="#444" strokeWidth={1.3} /></svg>
    </div>
  );
}

export default function App() {
  return (
    <div className="relative h-[578px] w-[1398px] overflow-hidden bg-[#555] pl-[85px] pt-[68px] font-['Noto_Sans_CJK_KR','Liberation_Sans',sans-serif]">
      <div className="absolute left-[13px] top-[9px] flex h-[22px] w-[191px] items-center overflow-hidden bg-[#646464] pl-[2px] font-['Liberation_Sans',sans-serif] text-[24px] font-bold text-[#b4b4b4]">
        <span className="origin-left scale-x-[0.8] whitespace-nowrap tracking-[0.2px] [-webkit-text-stroke:0.4px_#b4b4b4]">comeinsidebox.com</span>
      </div>
      <div className="h-[510px] w-[1245px] overflow-hidden border-x border-t border-[#777] bg-white">
        <TitleBar />
        <MenuBar />
        <Ribbon />
        <Toolbar />
        <Main />
      </div>
      <Watermarks />
      <ColorPopup />
      <Annotations />
      <Logo />
    </div>
  );
}
